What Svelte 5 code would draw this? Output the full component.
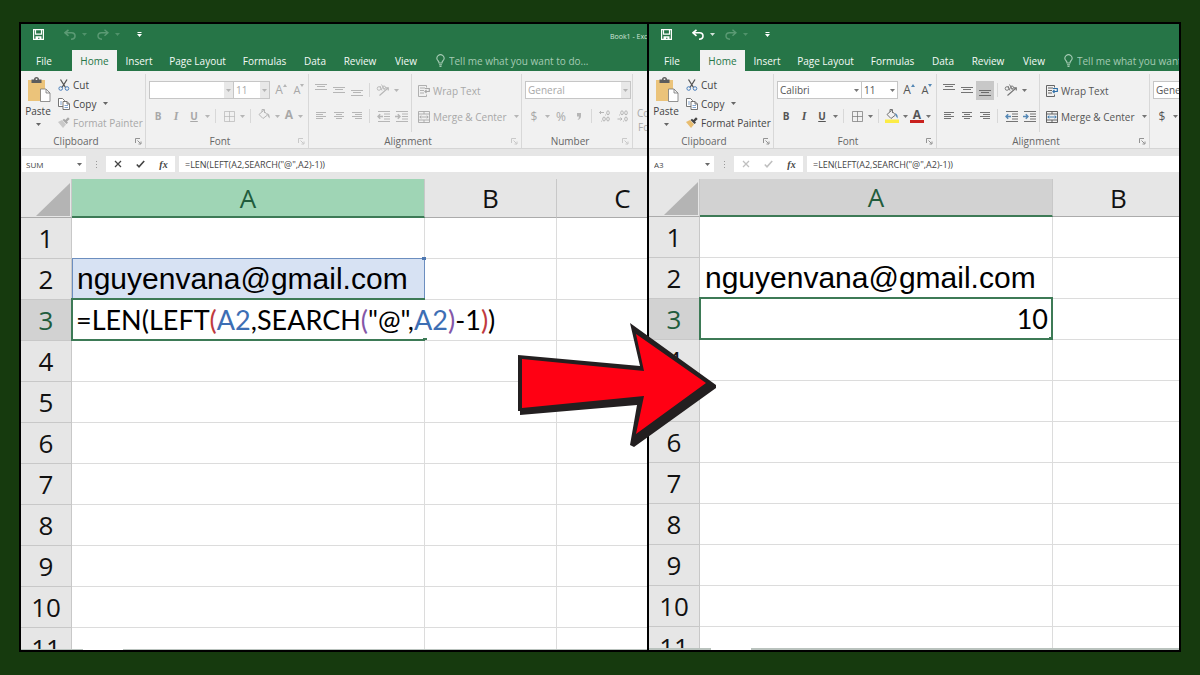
<script lang="ts">
	type Part = { text: string; tone?: 'red' | 'blue' | 'purple' };

	interface Sheet {
		id: string;
		editing: boolean;
		nameBox: string;
		font: string;
		columns: string[];
	}

	const sheets: Sheet[] = [
		{ id: 'before', editing: true, nameBox: 'SUM', font: '', columns: ['A', 'B', 'C'] },
		{ id: 'after', editing: false, nameBox: 'A3', font: 'Calibri', columns: ['A', 'B', 'C'] }
	];

	const tabs = [
		{ label: 'File', width: 51 },
		{ label: 'Home', width: 45 },
		{ label: 'Insert', width: 44 },
		{ label: 'Page Layout', width: 73 },
		{ label: 'Formulas', width: 61 },
		{ label: 'Data', width: 40 },
		{ label: 'Review', width: 50 },
		{ label: 'View', width: 42 }
	];

	const rows = [1, 2, 3, 4, 5, 6, 7, 8, 9, 10, 11];
	const formula = '=LEN(LEFT(A2,SEARCH("@",A2)-1))';
	const email = 'nguyenvana@gmail.com';

	const parts: Part[] = [
		{ text: '=LEN(LEFT' },
		{ text: '(', tone: 'red' },
		{ text: 'A2', tone: 'blue' },
		{ text: ',SEARCH' },
		{ text: '(', tone: 'purple' },
		{ text: '"@",' },
		{ text: 'A2', tone: 'blue' },
		{ text: ')', tone: 'purple' },
		{ text: '-1' },
		{ text: ')', tone: 'red' },
		{ text: ')' }
	];

	// line start/end pairs for the alignment glyphs
	const lines = {
		left: [[0, 10], [0, 7], [0, 10], [0, 7]],
		center: [[0, 10], [2, 8], [0, 10], [2, 8]],
		right: [[0, 10], [3, 10], [0, 10], [3, 10]]
	};
</script>

{#snippet caret()}
	<svg class="caret" width="5" height="3" viewBox="0 0 5 3"><path d="M0 0h5L2.500 3z" fill="currentColor" /></svg>
{/snippet}

{#snippet launcher(label: string)}
	<button class="launcher" aria-label={label}>
		<svg width="7" height="7" viewBox="0 0 7 7" fill="none" stroke="currentColor" stroke-width=".9">
			<path d="M.5 5V.5H5M2.500 2.500l3 3M6 3.500V6H3.500" />
		</svg>
	</button>
{/snippet}

{#snippet align(kind: 'left' | 'center' | 'right')}
	<svg width="10" height="10" viewBox="0 0 10 10" stroke="currentColor" stroke-width="1">
		{#each lines[kind] as [a, b], i}
			<path d="M{a} {i * 2 + 1.5}H{b}" />
		{/each}
	</svg>
{/snippet}

{#snippet valign(kind: string)}
	<svg width="12" height="16" viewBox="0 0 12 16" stroke="currentColor" stroke-width="1">
		{#if kind === 'Top'}
			<path d="M0 2.500h12M2 4.500h8M0 7.500h12" />
		{:else if kind === 'Middle'}
			<path d="M0 5.500h12M2 7.500h8M0 10.500h12" />
		{:else}
			<path d="M0 8.500h12M2 10.500h8M0 13.500h12" />
		{/if}
	</svg>
{/snippet}

{#snippet indent(out: boolean)}
	<svg width="13" height="11" viewBox="0 0 13 11" fill="none" stroke="currentColor">
		<path d="M1 .5h12M7 3h6M7 5.500h6M7 8h6M1 10.500h12" />
		<path class="accent" stroke-width="1.400" d={out ? 'M6 5.500H1M3.200 3.200L1 5.500l2.200 2.300' : 'M0 5.500h5M2.800 3.200L5 5.500 2.800 7.800'} />
	</svg>
{/snippet}

{#snippet decimals(increase: boolean)}
	<svg width="12" height="12" viewBox="0 0 12 12" fill="none" stroke="currentColor" stroke-width="1">
		{#if increase}
			<path class="accent" d="M5 2.500H.5M2 1L.5 2.500 2 4" />
			<ellipse cx="9" cy="2.800" rx="1.300" ry="2" />
			<ellipse cx="5" cy="9" rx="1.300" ry="2" />
			<ellipse cx="9" cy="9" rx="1.300" ry="2" />
			<path d="M6.200 5h.8M2 11.200h.8" />
		{:else}
			<ellipse cx="5" cy="2.800" rx="1.300" ry="2" />
			<ellipse cx="9" cy="2.800" rx="1.300" ry="2" />
			<path class="accent" d="M.5 9H5M3.500 7.500L5 9l-1.500 1.500" />
			<ellipse cx="9" cy="9" rx="1.300" ry="2" />
			<path d="M2 5h.8M6.200 11.200h.8" />
		{/if}
	</svg>
{/snippet}

{#snippet ribbon(sheet: Sheet)}
	<div class="ribbon">
		<section class="group clipboard">
			<div class="tools">
				<button class="paste">
					<svg width="24" height="26" viewBox="0 0 24 26">
						<path fill="#ebc37a" d="M1 3h17v21H1z" />
						<path fill="#5c5c5c" d="M4.500 2.500H7q0-2.500 2.500-2.500T12 2.500h2.500v3.500h-10z" />
						<path fill="#eee" d="M8.700 1.500h1.600v1.500H8.700z" />
						<path fill="#fff" stroke="#777" stroke-width=".8" d="M13.500 12h5.500l4 4v8.500h-9.500zM19 12v4h4" />
					</svg>
					<span>Paste</span>
					{@render caret()}
				</button>
				<div class="clip-list">
					<button class="line">
						<svg width="12" height="12" viewBox="0 0 12 12" fill="none">
							<path stroke="#555" stroke-width="1.300" d="M2.500.5l5 8M9 .5l-5 8" />
							<circle cx="2.700" cy="9.500" r="1.800" stroke="#4a7ebb" />
							<circle cx="9" cy="9.500" r="1.800" stroke="#4a7ebb" />
						</svg>
						Cut
					</button>
					<button class="line">
						<svg width="12" height="12" viewBox="0 0 12 12" fill="#fff" stroke="#666" stroke-width=".9">
							<path d="M.5.5h4L6.500 2.500v6h-6z" />
							<path d="M5 3.500h4l2.500 2.500v5.500H5zM9 3.500v2.500h2.500" />
							<path stroke="#4a7ebb" d="M2 4h2M2 6h2M6.500 7.500h3.500M6.500 9.500h3.500" stroke-width=".7" />
						</svg>
						Copy
						{@render caret()}
					</button>
					<button class="line" class:dim={sheet.editing} disabled={sheet.editing}>
						<svg width="12" height="12" viewBox="0 0 12 12">
							<path fill={sheet.editing ? '#c9c9c9' : '#e8bd70'} d="M0 5l4-2 4 4.500L5 11z" />
							<path fill="currentColor" d="M4.500 3L6 1.800l1.300 1.300L10 .3 11.700 2 9 4.600l1 1.200-1.500 1.200z" />
						</svg>
						Format Painter
					</button>
				</div>
			</div>
			<footer><span>Clipboard</span>{@render launcher('Clipboard options')}</footer>
		</section>

		<section class="group font">
			<div class="tools stack">
				<div class="row">
					<label class="combo family">
						<select aria-label="Font" disabled={sheet.editing}><option>{sheet.font}</option></select>
						<span>{@render caret()}</span>
					</label>
					<label class="combo size">
						<select aria-label="Font size" disabled={sheet.editing}><option>11</option></select>
						<span>{@render caret()}</span>
					</label>
					<button class="tool grow" aria-label="Increase font size">A<svg width="4" height="3" viewBox="0 0 4 3"><path class="accent-fill" d="M0 3l2-3 2 3z" /></svg></button>
					<button class="tool grow shrink" aria-label="Decrease font size">A<svg width="4" height="3" viewBox="0 0 4 3"><path class="accent-fill" d="M0 0h4L2 3z" /></svg></button>
				</div>
				<div class="row">
					<button class="tool"><b>B</b></button>
					<button class="tool"><i>I</i></button>
					<button class="tool"><u>U</u></button>
					<button class="drop" aria-label="Underline styles">{@render caret()}</button>
					<span class="rule"></span>
					<button class="tool" aria-label="Borders">
						<svg width="11" height="11" viewBox="0 0 11 11" fill="none" stroke="currentColor">
							<path d="M.5.5h10v10H.5zM5.500.5v10M.5 5.500h10" stroke-width=".7" />
						</svg>
					</button>
					<button class="drop" aria-label="Border styles">{@render caret()}</button>
					<span class="rule"></span>
					<button class="tool" aria-label="Fill color">
						<svg width="14" height="14" viewBox="0 0 14 14" fill="none" stroke="currentColor" stroke-width="1">
							<path d="M2 5.500L6.500 1.500 10.500 6 6 9.500zM5 3V.5h2.500V4" />
							<path class="accent-fill" stroke="none" d="M10 4q3.500 1.500 2.500 5.500Q10.500 7.500 10 4z" />
							{#if !sheet.editing}<path fill="#ffeb1c" stroke="none" d="M0 10.500h14v3.500H0z" />{/if}
						</svg>
					</button>
					<button class="drop" aria-label="Fill colors">{@render caret()}</button>
					<button class="tool ink" class:colored={!sheet.editing} aria-label="Font color">A</button>
					<button class="drop" aria-label="Font colors">{@render caret()}</button>
				</div>
			</div>
			<footer><span>Font</span>{@render launcher('Font options')}</footer>
		</section>

		<section class="group alignment">
			<div class="tools">
				<div class="stack positions">
					<div class="row">
						{#each ['Top', 'Middle', 'Bottom'] as kind}
							<button class="tool" class:pressed={kind === 'Bottom' && !sheet.editing} aria-label="{kind} align">{@render valign(kind)}</button>
						{/each}
						<span class="rule"></span>
						<button class="tool" aria-label="Orientation">
							<svg width="14" height="12" viewBox="0 0 14 12" fill="none" stroke="currentColor" stroke-width=".9">
								<circle cx="3" cy="4.500" r="1.800" /><path d="M4 2l2 4.500M5.500.5l3 5" />
								<circle cx="8" cy="3.500" r="1.500" />
								<path d="M3.500 11.500L12 4M9.500 3.800h2.800v2.700" stroke-width="1.100" />
							</svg>
						</button>
						<button class="drop" aria-label="Orientation styles">{@render caret()}</button>
					</div>
					<div class="row">
						<button class="tool" aria-label="Align left">{@render align('left')}</button>
						<button class="tool" aria-label="Center">{@render align('center')}</button>
						<button class="tool" aria-label="Align right">{@render align('right')}</button>
						<span class="rule"></span>
						<button class="tool" aria-label="Decrease indent">{@render indent(true)}</button>
						<button class="tool" aria-label="Increase indent">{@render indent(false)}</button>
					</div>
				</div>
				<div class="stack merge">
					<button class="line">
						<svg width="12" height="12" viewBox="0 0 12 12" fill="none" stroke="currentColor" stroke-width=".9">
							<path d="M8.500 2.500V.5h-8v11h8V9.500M2 3h5M2 5.500h4M2 8h4" />
							<path class="accent" stroke-width="1.200" d="M7 3.500h4.300v3H7M8.500 5L7 6.500 8.500 8" />
						</svg>
						Wrap Text
					</button>
					<button class="line">
						<svg width="12" height="12" viewBox="0 0 12 12" fill="none" stroke="currentColor" stroke-width=".9">
							<path d="M.5.5h11v11H.5zM.5 3h11M.5 9h11M6 .5V3M6 9v2.500" />
							<path class="accent" d="M1.800 6h8.400M3.300 4.600L1.800 6l1.500 1.400M8.700 4.600L10.200 6 8.700 7.400" />
						</svg>
						Merge &amp; Center
						{@render caret()}
					</button>
				</div>
			</div>
			<footer><span>Alignment</span>{@render launcher('Alignment options')}</footer>
		</section>

		<section class="group number">
			<div class="tools stack">
				<div class="row">
					<label class="combo format">
						<select aria-label="Number format" disabled={sheet.editing}><option>General</option></select>
						<span>{@render caret()}</span>
					</label>
				</div>
				<div class="row">
					<button class="tool symbol">$</button>
					<button class="drop" aria-label="Currencies">{@render caret()}</button>
					<button class="tool symbol">%</button>
					<button class="tool symbol" aria-label="Comma style">
						<svg width="4" height="7" viewBox="0 0 4 7"><path fill="currentColor" d="M0 0h4v3Q4 6 .5 7 2 5.500 2 3.500H0z" /></svg>
					</button>
					<span class="rule"></span>
					<button class="tool" aria-label="Increase decimal">{@render decimals(true)}</button>
					<button class="tool" aria-label="Decrease decimal">{@render decimals(false)}</button>
				</div>
			</div>
			<footer><span>Number</span>{@render launcher('Number options')}</footer>
		</section>

		<section class="group styles">
			<button class="conditional">Conditional<br />Formatting</button>
		</section>
	</div>
{/snippet}

{#snippet book(sheet: Sheet)}
	<div class="window" class:editing={sheet.editing}>
		<header class="title-bar">
			<button aria-label="Save">
				<svg width="11" height="11" viewBox="0 0 11 11">
					<path fill="none" stroke="#fff" stroke-width="1.200" d="M.6.6h9.800v9.800H.6zM2.500.6v4.600h6V.6" />
					<path fill="#fff" d="M2.500 7.200h6V10.500H6.500V8.700H5v1.800H2.500z" />
				</svg>
			</button>
			<button class="undo" aria-label="Undo">
				<svg width="12" height="11" viewBox="0 0 12 11" fill="none" stroke="currentColor" stroke-width="1.600">
					<path d="M4.500.8L1 3.800l3.500 3M1.200 3.800H7.500Q11 4 11 7T7 10.200" />
				</svg>
				{@render caret()}
			</button>
			<button class="redo" aria-label="Redo">
				<svg width="12" height="11" viewBox="0 0 12 11" fill="none" stroke="currentColor" stroke-width="1.400">
					<path d="M7.500.8L11 3.800l-3.500 3M10.800 3.800H4.500Q1 4 1 7t4 3.200" />
				</svg>
				{@render caret()}
			</button>
			<button class="customize" aria-label="Customize toolbar">
				<svg width="5" height="5" viewBox="0 0 5 5"><path fill="#fff" d="M.5 0h4v1h-4zM0 2h5L2.500 5z" /></svg>
			</button>
			<span class="title">Book1 - Excel</span>
		</header>

		<nav class="tabs">
			{#each tabs as tab}
				<button class:active={tab.label === 'Home'} style="width: {tab.width}px">{tab.label}</button>
			{/each}
			<label class="tell">
				<svg width="9" height="13" viewBox="0 0 9 13" fill="none" stroke="currentColor" stroke-width="1.100">
					<path d="M3 9Q3 7.500 1.800 6.500a3.500 3.500 0 1 1 5.400 0Q6 7.500 6 9zM3 10.800h3M3.500 12.400h2" />
				</svg>
				<input aria-label="Tell me" placeholder="Tell me what you want to do..." />
			</label>
		</nav>

		{@render ribbon(sheet)}

		<div class="formula-bar">
			<label class="name-box">
				<input aria-label="Name box" value={sheet.nameBox} />
				{@render caret()}
			</label>
			<span class="dots"><i></i><i></i><i></i></span>
			<div class="entry">
				<button aria-label="Cancel" disabled={!sheet.editing}>
					<svg width="8" height="8" viewBox="0 0 8 8" fill="none" stroke="currentColor" stroke-width="1.300"><path d="M1 1l6 6M7 1L1 7" /></svg>
				</button>
				<button aria-label="Enter" disabled={!sheet.editing}>
					<svg width="9" height="8" viewBox="0 0 9 8" fill="none" stroke="currentColor" stroke-width="1.600"><path d="M.8 4.500L3 6.800 8.200 1" /></svg>
				</button>
				<button class="fx">fx</button>
			</div>
			<input class="formula" aria-label="Formula" value={formula} />
		</div>

		<div class="grid">
			<table>
				<colgroup>
					<col class="col-head" /><col class="col-a" /><col class="col-b" /><col class="col-b" />
				</colgroup>
				<thead>
					<tr>
						<th class="corner"><svg width="34" height="33" viewBox="0 0 34 33"><path d="M34 0v33H0z" fill="#b4b4b4" /></svg></th>
						{#each sheet.columns as col}
							<th class:current={col === 'A'}>{col}</th>
						{/each}
					</tr>
				</thead>
				<tbody>
					{#each rows as row}
						<tr>
							<th class:current={row === 3}>{row}</th>
							{#if row === 2}
								<td class="email">
									{email}
									{#if sheet.editing}<span class="reference"></span>{/if}
								</td>
							{:else if row === 3}
								<td class="selected">
									{#if sheet.editing}
										<div class="editor">{#each parts as part}<span class={part.tone}>{part.text}</span>{/each}</div>
									{:else}
										10
									{/if}
									<span class="outline"></span>
								</td>
							{:else}
								<td></td>
							{/if}
							<td></td>
							<td></td>
						</tr>
					{/each}
				</tbody>
			</table>
		</div>
		<div class="sheet-strip"><span></span></div>
	</div>
{/snippet}

<main>
	{#each sheets as sheet (sheet.id)}
		<div class="pane">
			{@render book(sheet)}
			{#if !sheet.editing}
				<svg class="arrow" width="198" height="126" viewBox="0 0 198 126">
					<path fill="#231f20" d="M0 33l122 11L112 1l86 62v3l-82 59-4-2 7-40-117 10v-4H0z" />
					<path fill="#ff0013" d="M4 37l122 12-8-37 70 49-70 51 8-38L4 86z" />
				</svg>
			{/if}
		</div>
	{/each}
</main>

<style>
	:global(body) {
		background: #163a0e;
	}

	main {
		box-sizing: border-box;
		height: 100vh;
		padding: 22px 19px 23px;
		display: grid;
		grid-template-columns: minmax(0, 628fr) minmax(0, 534fr);
		font-family: 'Open Sans', 'Noto Sans', sans-serif;
		font-size: 10px;
		color: #444;
	}

	.pane {
		position: relative;
		min-height: 0;
		border: 2px solid #000;
		border-right-width: 0;
	}

	.pane:last-child {
		border-right-width: 2px;
	}

	.window {
		--ink: #555;
		--accent: #2f6fa8;
		--line: #d8d8d8;
		height: 100%;
		display: flex;
		flex-direction: column;
		overflow: hidden;
		background: #e6e6e6;
	}

	.window.editing {
		--ink: #a8a8a8;
		--accent: #a8a8a8;
	}

	button,
	input,
	select {
		font: inherit;
		color: inherit;
		background: none;
		border: 0;
		padding: 0;
		margin: 0;
		border-radius: 0;
		min-width: 0;
	}

	svg {
		flex: none;
		display: block;
	}

	.caret,
	.tool svg {
		opacity: 0.8;
	}

	.accent {
		stroke: var(--accent);
	}

	.accent-fill {
		fill: var(--accent);
	}

	.title-bar {
		flex: none;
		height: 26px;
		display: flex;
		align-items: flex-start;
		padding: 5px 0 0 12px;
		box-sizing: border-box;
		background: #267547;
		color: #fff;
		white-space: nowrap;
	}

	.title-bar button {
		flex: none;
		display: flex;
		align-items: center;
		gap: 6px;
		height: 11px;
	}

	.title-bar .undo {
		margin-left: 20px;
	}

	.title-bar .redo {
		margin-left: 10px;
		color: #5b9a74;
	}

	.title-bar .undo:has(+ .redo) {
		min-width: 23px;
	}

	.editing .undo {
		color: #5b9a74;
	}

	.title-bar .customize {
		margin-left: 17px;
	}

	.title {
		flex: none;
		margin-left: 468px;
		font-size: 7px;
		line-height: 16px;
		color: #d4e6db;
	}

	.tabs {
		flex: none;
		height: 21px;
		display: flex;
		background: #267547;
		color: #f4faf6;
		white-space: nowrap;
	}

	.tabs button {
		flex: none;
		text-align: center;
	}

	.tabs button:first-child {
		padding-right: 5px;
	}

	.tabs .active {
		background: #f1f1f1;
		color: #267547;
	}

	.tell {
		flex: none;
		display: flex;
		align-items: center;
		gap: 4px;
		padding-left: 9px;
		color: #a5cbb4;
	}

	.tell input {
		width: 160px;
	}

	.tell input::placeholder {
		color: inherit;
		opacity: 1;
	}

	.ribbon {
		flex: none;
		height: 78px;
		display: flex;
		background: #f1f1f1;
		border-bottom: 1px solid #d5d5d5;
		box-sizing: border-box;
		white-space: nowrap;
	}

	.group {
		flex: none;
		display: flex;
		flex-direction: column;
		margin: 3px 0 0;
		border-right: 1px solid var(--line);
		box-sizing: border-box;
	}

	.clipboard {
		width: 125px;
	}

	.font {
		width: 163px;
	}

	.alignment {
		width: 213px;
	}

	.number {
		width: 111px;
	}

	.styles {
		border: 0;
	}

	.tools {
		flex: 1;
		display: flex;
		min-height: 0;
	}

	.stack {
		display: flex;
		flex-direction: column;
		gap: 6px;
		padding-top: 6px;
		box-sizing: border-box;
		color: var(--ink);
	}

	.group footer {
		flex: none;
		display: flex;
		align-items: center;
		height: 14px;
		color: #666;
	}

	.group footer span {
		flex: 1;
		text-align: center;
		padding-right: 4px;
	}

	.launcher {
		color: #888;
		padding-right: 3px;
	}

	.editing .group:not(.clipboard) .launcher {
		color: #c4c4c4;
	}

	.paste {
		width: 34px;
		padding-top: 3px;
		display: flex;
		flex-direction: column;
		align-items: center;
		justify-content: flex-start;
		line-height: 16px;
	}

	.paste svg:first-child {
		margin-left: 2px;
	}

	.paste .caret {
		margin-top: 4px;
	}

	.clip-list {
		display: flex;
		flex-direction: column;
		padding: 1px 0 0 3px;
	}

	.line {
		display: flex;
		align-items: center;
		gap: 3px;
		height: 19px;
	}

	.line .caret {
		margin-left: 4px;
	}

	.line.dim {
		color: #a8a8a8;
	}

	.row {
		display: flex;
		align-items: center;
		height: 20px;
	}

	.font .row,
	.number .row {
		padding-left: 3px;
	}

	.combo {
		display: flex;
		height: 18px;
		box-sizing: border-box;
		border: 1px solid #c6c6c6;
		background: #fff;
	}

	.combo select {
		flex: 1;
		appearance: none;
		padding-left: 2px;
		opacity: 1;
	}

	.combo span {
		width: 9px;
		display: grid;
		place-items: center;
	}

	.editing .combo span {
		background: #e8e8e8;
	}

	.family {
		width: 85px;
	}

	.size {
		width: 36px;
		border-left: 0;
	}

	.format {
		width: 106px;
	}

	.tool {
		width: 18px;
		height: 19px;
		display: flex;
		align-items: center;
		justify-content: center;
	}

	.tool b,
	.tool i,
	.tool u {
		font-weight: 700;
	}

	.tool i {
		font-family: 'Liberation Serif', serif;
		font-size: 12px;
	}

	.grow {
		align-items: flex-start;
		margin-left: 2px;
		font-size: 12px;
		line-height: 18px;
	}

	.grow svg {
		margin-top: 3px;
	}

	.shrink {
		margin-left: 0;
		font-size: 11px;
	}

	.symbol {
		font-size: 12px;
	}

	.ink {
		width: 14px;
		height: 14px;
		font-weight: 700;
		font-size: 12px;
		line-height: 10px;
		padding-bottom: 2px;
		box-sizing: border-box;
	}

	.ink.colored {
		border-bottom: 3px solid #c9211e;
		padding: 0;
	}

	.pressed {
		background: #c8c8c8;
	}

	.drop {
		width: 9px;
		height: 19px;
		display: grid;
		place-items: center;
	}

	.rule {
		width: 1px;
		height: 14px;
		margin: 0 4px 0 3px;
		background: var(--line);
	}

	.positions {
		width: 103px;
		padding-left: 3px;
		border-right: 1px solid var(--line);
		margin-bottom: 2px;
	}

	.merge {
		padding: 7px 0 0 6px;
		gap: 7px;
	}

	.conditional {
		padding: 32px 0 0 4px;
		line-height: 14px;
		color: var(--ink);
	}

	.formula-bar {
		flex: none;
		display: flex;
		align-items: stretch;
		height: 16px;
		margin: 7px 0;
		padding-left: 1px;
		font-size: 9px;
	}

	.name-box {
		width: 64px;
		display: flex;
		align-items: center;
		padding: 0 4px;
		box-sizing: border-box;
		background: #fff;
	}

	.name-box input {
		flex: 1;
		font-size: 8px;
	}

	.dots {
		width: 20px;
		display: flex;
		flex-direction: column;
		align-items: center;
		justify-content: center;
		gap: 2px;
	}

	.dots i {
		width: 1px;
		height: 1px;
		background: #999;
	}

	.entry {
		width: 69px;
		display: flex;
		background: #fff;
	}

	.entry button {
		flex: 1;
		display: grid;
		place-items: center;
	}

	.entry button:disabled {
		color: #c0c0c0;
	}

	.fx {
		font: italic 700 10px 'Liberation Serif', serif;
	}

	.formula {
		flex: 1;
		margin-left: 4px;
		padding-left: 6px;
		background: #fff;
	}

	.grid {
		flex: 1;
		min-height: 0;
		overflow: hidden;
		background: #fff;
	}

	table {
		width: 668px;
		table-layout: fixed;
		border-collapse: separate;
		border-spacing: 0;
	}

	.col-head {
		width: 51px;
	}

	.col-a {
		width: 353px;
	}

	.col-b {
		width: 132px;
	}

	th,
	td {
		height: 41px;
		box-sizing: border-box;
		padding: 0;
		border-right: 1px solid #dcdcdc;
		border-bottom: 1px solid #dcdcdc;
	}

	th {
		background: #e6e6e6;
		border-color: #c8c8c8;
		color: #111;
		font-size: 26px;
		line-height: 36px;
		font-weight: 400;
	}

	thead th {
		height: 39px;
		border-bottom-color: #ababab;
	}

	.window:not(.editing) thead th {
		height: 38px;
	}

	th.current {
		background: #d2d2d2;
		color: #215c3c;
	}

	thead th.current {
		border-bottom: 2px solid #3d7a56;
	}

	.editing thead th.current {
		background: #9fd5b5;
	}

	.corner svg {
		margin: 2px 1px 0 auto;
	}

	td {
		position: relative;
		font-size: 28px;
		line-height: 38px;
		color: #000;
		white-space: nowrap;
	}

	.email {
		padding-left: 5px;
		font: 30px/38px 'Liberation Sans', sans-serif;
	}

	.editing .email {
		background: #d7e2f3;
	}

	.selected {
		font-family: Lato, sans-serif;
		font-size: 27px;
		text-align: right;
		padding-right: 4px;
	}

	/* marks drawn over the cell edges */
	.reference,
	.outline {
		position: absolute;
		inset: -1px -1px -1px 0;
		border: 1px solid #6c8ebf;
	}

	.outline {
		inset: -2px -1px -1px -1px;
		border: 2px solid #3d7a56;
	}

	.editing .outline {
		border-right: 0;
	}

	.outline::after,
	.reference::after {
		content: '';
		position: absolute;
		right: -2px;
		bottom: -2px;
		width: 4px;
		height: 3px;
		background: #3d7a56;
	}

	.reference::after {
		top: -2px;
		background: #4f78b0;
	}

	.editor {
		position: absolute;
		left: 0;
		top: 0;
		width: 480px;
		height: 40px;
		padding-left: 4px;
		box-sizing: border-box;
		text-align: left;
		line-height: 40px;
		background: #fff;
	}

	.red {
		color: #c03a3e;
	}

	.blue {
		color: #3d6eb4;
	}

	.purple {
		color: #8457a8;
	}

	.sheet-strip {
		flex: none;
		height: 1px;
		padding-left: 62px;
		background: #b9c2bd;
	}

	.sheet-strip span {
		display: block;
		width: 40px;
		height: 100%;
		background: #fff;
	}

	.window:not(.editing) .sheet-strip {
		height: 2px;
	}

	.arrow {
		position: absolute;
		left: -131px;
		top: 298px;
	}
</style>
